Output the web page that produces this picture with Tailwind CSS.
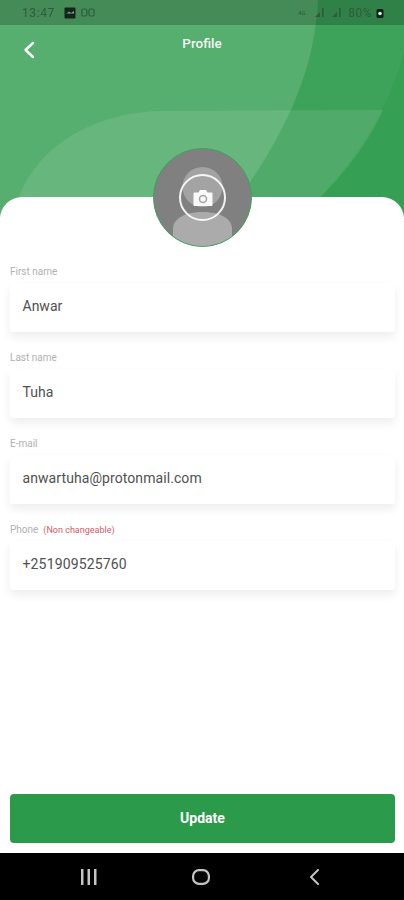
<!DOCTYPE html>
<html lang="en">
<head>
  <meta charset="UTF-8">
  <meta name="viewport" content="width=device-width, initial-scale=1.0">
  <title>Profile</title>
  <script src="https://cdn.jsdelivr.net/npm/@tailwindcss/browser@4"></script>
</head>
<body class="bg-white font-['Roboto',sans-serif]">
  <div class="relative w-[404px] h-[900px] overflow-hidden flex flex-col bg-white">
    <!-- Header -->
    <header class="relative h-[217px] shrink-0 bg-[#3da25a] overflow-hidden">
      <svg class="absolute inset-0 blur-[0.5px]" width="404" height="217" viewBox="0 0 404 217">
        <path d="M404 52 C392 100 360 160 300 217 L404 217 Z" fill="#2f9c4f" fill-opacity="0.55"/>
        <path d="M0 0 L318 0 C315 60 295 125 225 217 L0 217 Z" fill="#ffffff" fill-opacity="0.13"/>
        <path d="M14 217 C22 160 80 113 160 111 L383 110 C365 150 335 185 300 217 Z" fill="#ffffff" fill-opacity="0.1"/>
      </svg>
      <!-- Status bar -->
      <div class="absolute top-0 left-0 right-0 h-[25px] bg-black/20 flex items-center justify-between pl-[22px] pr-[20px] text-[#2f5a3d] text-[12px]">
        <div class="flex items-center gap-[9px] blur-[0.7px]">
          <span class="tracking-[0.6px]">13:47</span>
          <div class="flex items-center gap-[5px]">
            <svg width="12" height="12" viewBox="0 0 12 12"><rect x="0.5" y="0.5" width="11" height="11" rx="1" fill="#14241a"/><path d="M2 7 L5 4.500 L7 6 L10 4 V6.500 H2 Z" fill="#7da58a"/></svg>
            <svg width="14" height="10" viewBox="0 0 14 10" fill="none" stroke="#2f5a3d" stroke-width="1.200"><rect x="0.800" y="1" width="5" height="7" rx="1.500"/><rect x="8" y="1" width="5" height="7" rx="1.500"/></svg>
          </div>
        </div>
        <div class="flex items-center gap-[4px] blur-[0.7px]">
          <span class="text-[6px] leading-[7px] w-[9px] mr-[3px]">4G</span>
          <svg width="13" height="11" viewBox="0 0 13 11" fill="#2f5a3d"><path d="M1 10 L6 5 V10 Z"/><rect x="8" y="1" width="1.600" height="9"/></svg>
          <svg width="13" height="11" viewBox="0 0 13 11" fill="#2f5a3d"><path d="M1 10 L6 5 V10 Z"/><rect x="8" y="1" width="1.600" height="9"/></svg>
          <span class="tracking-[0.5px]">80%</span>
          <svg width="8" height="10" viewBox="0 0 8 10"><rect x="0.500" y="1" width="7" height="9" rx="1.500" fill="#10201a"/><circle cx="4" cy="5.500" r="1.800" fill="#e5e7eb"/></svg>
        </div>
      </div>
      <!-- Title row -->
      <button class="absolute left-[23px] top-[41px] w-[12px] h-[18px]">
        <svg width="12" height="18" viewBox="0 0 12 18" fill="none" stroke="#ffffff" stroke-width="2.400" stroke-linecap="round" stroke-linejoin="round"><path d="M10 2 L2.500 9 L10 16"/></svg>
      </button>
      <h1 class="absolute left-0 right-0 top-[35px] text-center text-white/95 text-[13.5px] leading-[17px] font-medium">Profile</h1>
    </header>

    <!-- Sheet -->
    <main class="relative -mt-5 flex-1 bg-white rounded-t-[22px] pl-[10px] pr-[9px] pt-[69px] flex flex-col">
      <div class="flex flex-col">
        <label class="text-[10px] leading-[12px] text-[#b0b0b0] mb-[5px]">First name</label>
        <div class="h-[49px] bg-white rounded-[3px] shadow-[0_5px_10px_rgba(0,0,0,0.07)] flex items-center pl-[12.5px] text-[14px] text-[#505050] mb-[20px] pb-[2px]">Anwar</div>
        <label class="text-[10px] leading-[12px] text-[#b0b0b0] mb-[5px]">Last name</label>
        <div class="h-[49px] bg-white rounded-[3px] shadow-[0_5px_10px_rgba(0,0,0,0.07)] flex items-center pl-[12.5px] text-[14px] text-[#505050] mb-[20px] pb-[2px]">Tuha</div>
        <label class="text-[10px] leading-[12px] text-[#b0b0b0] mb-[5px]">E-mail</label>
        <div class="h-[49px] bg-white rounded-[3px] shadow-[0_5px_10px_rgba(0,0,0,0.07)] flex items-center pl-[12.5px] text-[14px] text-[#505050] mb-[20px] pb-[2px] tracking-[0.08px]">anwartuha@protonmail.com</div>
        <div class="flex items-center gap-[5px] mb-[5px]">
          <label class="text-[10px] leading-[12px] text-[#b0b0b0]">Phone</label>
          <span class="text-[9px] leading-[12px] text-[#cf5b66]">(Non changeable)</span>
        </div>
        <div class="h-[49px] bg-white rounded-[3px] shadow-[0_5px_10px_rgba(0,0,0,0.07)] flex items-center pl-[12.5px] text-[14px] text-[#505050] pb-[2px] tracking-[0.15px]">+251909525760</div>
      </div>
      <button class="mt-auto mb-[10px] h-[49px] w-full bg-[#2b9a4b] rounded-[4px] text-white text-[14px] font-bold">Update</button>
    </main>

    <!-- Avatar -->
    <div class="absolute left-[153px] top-[148px] w-[99px] h-[99px] rounded-full border border-[#3da25a] bg-[#808080] overflow-hidden flex items-center justify-center">
      <svg class="absolute inset-0" width="97" height="97" viewBox="0 0 97 97">
        <ellipse cx="48.500" cy="38" rx="20" ry="20" fill="#a3a3a3"/>
        <path d="M19 97 V80 C19 69 32 63 48.500 63 C65 63 78 69 78 80 V97 Z" fill="#ababab"/>
      </svg>
      <div class="relative w-[47px] h-[47px] rounded-full border-2 border-white/90 flex items-center justify-center">
        <svg width="20" height="18" viewBox="0 0 20 18"><path d="M1.500 3.500 H5.500 L7 1 H13 L14.500 3.500 H18.500 A1 1 0 0 1 19.500 4.500 V16 A1 1 0 0 1 18.500 17 H1.500 A1 1 0 0 1 0.500 16 V4.500 A1 1 0 0 1 1.500 3.500 Z" fill="#fafafa"/><circle cx="10" cy="10" r="3.500" fill="none" stroke="#a3a3a3" stroke-width="1.500"/></svg>
      </div>
    </div>

    <!-- Nav bar -->
    <nav class="h-[47px] shrink-0 bg-black flex items-center pl-[81px]">
      <svg class="mr-[95px]" width="16" height="16" viewBox="0 0 16 16" fill="#c4c4c4"><rect x="0" y="0" width="2.500" height="16"/><rect x="6.500" y="0" width="2.500" height="16"/><rect x="13" y="0" width="2.500" height="16"/></svg>
      <svg class="mr-[99px]" width="18" height="16" viewBox="0 0 18 16" fill="none" stroke="#c4c4c4" stroke-width="2.200"><rect x="1.100" y="1.100" width="15.800" height="13.800" rx="6"/></svg>
      <svg width="10" height="16" viewBox="0 0 10 16" fill="none" stroke="#c4c4c4" stroke-width="2" stroke-linecap="round" stroke-linejoin="round"><path d="M9 1 L2 8 L9 15"/></svg>
    </nav>
  </div>
</body>
</html>
